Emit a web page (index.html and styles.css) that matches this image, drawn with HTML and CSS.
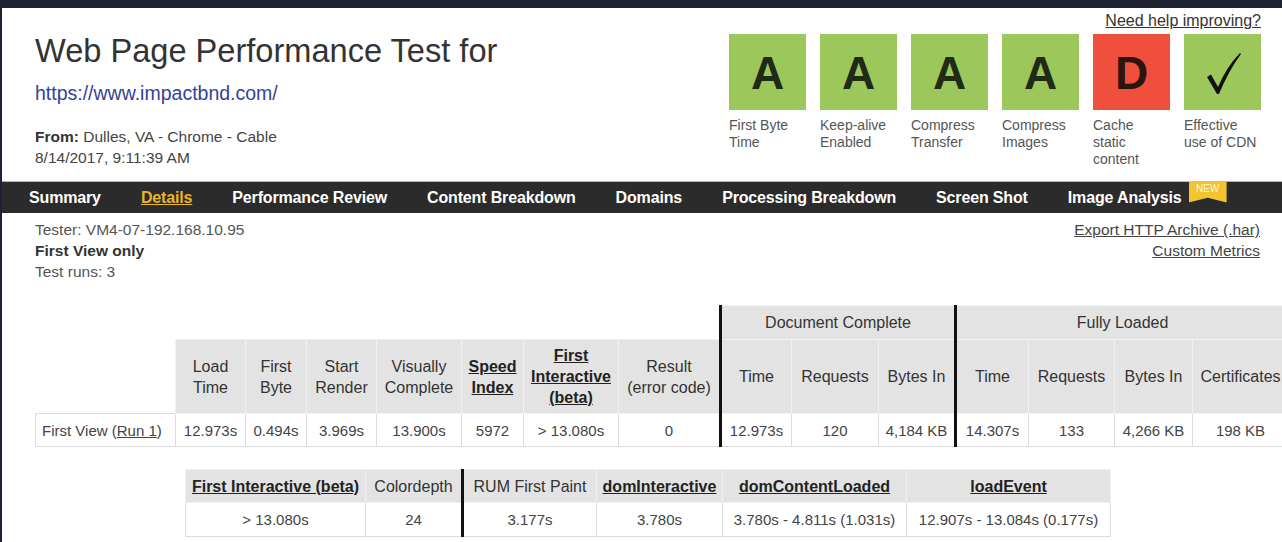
FILE: index.html
```html
<!DOCTYPE html>
<html lang="en">
<head>
    <meta charset="UTF-8">
    <title>WebPageTest Test Result - Details</title>
    <link rel="stylesheet" href="styles.css">
</head>
<body>
<div class="frame">
    <!-- test header -->
    <header class="test-head">
        <div class="test-info">
            <h1 class="test-title">Web Page Performance Test for</h1>
            <a class="test-url" href="#">https://www.impactbnd.com/</a>
            <p class="test-from"><b>From:</b> Dulles, VA - Chrome - Cable</p>
            <p class="test-date">8/14/2017, 9:11:39 AM</p>
        </div>

        <div class="grades">
            <a class="help-link" href="#">Need help improving?</a>
            <ul class="grade-list">
                <li class="grade">
                    <div class="grade-box good">A</div>
                    <span class="grade-label">First Byte Time</span>
                </li>
                <li class="grade">
                    <div class="grade-box good">A</div>
                    <span class="grade-label">Keep-alive Enabled</span>
                </li>
                <li class="grade">
                    <div class="grade-box good">A</div>
                    <span class="grade-label">Compress Transfer</span>
                </li>
                <li class="grade">
                    <div class="grade-box good">A</div>
                    <span class="grade-label">Compress Images</span>
                </li>
                <li class="grade">
                    <div class="grade-box bad">D</div>
                    <span class="grade-label">Cache static content</span>
                </li>
                <li class="grade">
                    <div class="grade-box good">
                        <svg class="check" width="40" height="46" viewBox="0 0 40 46">
                            <path d="M4 27 L8 24.5 L15 37 Q24 16 37 3 L38 4 Q26 20 16 44 L14 44 Z" fill="#111"/>
                        </svg>
                    </div>
                    <span class="grade-label">Effective use of CDN</span>
                </li>
            </ul>
        </div>
    </header>

    <!-- result tabs -->
    <nav class="tabs">
        <a href="#">Summary</a>
        <a href="#" class="active">Details</a>
        <a href="#">Performance Review</a>
        <a href="#">Content Breakdown</a>
        <a href="#">Domains</a>
        <a href="#">Processing Breakdown</a>
        <a href="#">Screen Shot</a>
        <a href="#" class="has-badge">Image Analysis<span class="badge-new">NEW</span></a>
    </nav>

    <div class="sub-head">
        <div class="tester">
            <p>Tester: VM4-07-192.168.10.95</p>
            <p><b>First View only</b></p>
            <p>Test runs: 3</p>
        </div>
        <div class="exports">
            <a href="#">Export HTTP Archive (.har)</a>
            <a href="#">Custom Metrics</a>
        </div>
    </div>

    <!-- main result table -->
    <table class="results">
        <colgroup>
            <col style="width:140px"><col style="width:70px"><col style="width:61px"><col style="width:70px">
            <col style="width:85px"><col style="width:62px"><col style="width:95px"><col style="width:102px">
            <col style="width:71px"><col style="width:87px"><col style="width:77px">
            <col style="width:73px"><col style="width:86px"><col style="width:78px"><col style="width:96px">
        </colgroup>
        <tr class="group-row">
            <td class="blank" colspan="8"></td>
            <th class="sep" colspan="3">Document Complete</th>
            <th class="sep" colspan="4">Fully Loaded</th>
        </tr>
        <tr class="head-row">
            <td class="blank"></td>
            <th>Load<br>Time</th>
            <th>First<br>Byte</th>
            <th>Start<br>Render</th>
            <th>Visually<br>Complete</th>
            <th><a href="#">Speed<br>Index</a></th>
            <th><a href="#">First<br>Interactive<br>(beta)</a></th>
            <th>Result<br>(error code)</th>
            <th class="sep">Time</th>
            <th>Requests</th>
            <th>Bytes In</th>
            <th class="sep">Time</th>
            <th>Requests</th>
            <th>Bytes In</th>
            <th>Certificates</th>
        </tr>
        <tr class="data-row">
            <td class="label">First View (<a href="#">Run 1</a>)</td>
            <td>12.973s</td>
            <td>0.494s</td>
            <td>3.969s</td>
            <td>13.900s</td>
            <td>5972</td>
            <td>&gt; 13.080s</td>
            <td>0</td>
            <td class="sep">12.973s</td>
            <td>120</td>
            <td>4,184 KB</td>
            <td class="sep">14.307s</td>
            <td>133</td>
            <td>4,266 KB</td>
            <td>198 KB</td>
        </tr>
    </table>

    <!-- RUM / extra metrics -->
    <table class="rum">
        <colgroup>
            <col style="width:180px"><col style="width:97px"><col style="width:134px">
            <col style="width:126px"><col style="width:184px"><col style="width:204px">
        </colgroup>
        <tr>
            <th><a href="#">First Interactive (beta)</a></th>
            <th>Colordepth</th>
            <th class="sep">RUM First Paint</th>
            <th><a href="#">domInteractive</a></th>
            <th><a href="#">domContentLoaded</a></th>
            <th><a href="#">loadEvent</a></th>
        </tr>
        <tr>
            <td>&gt; 13.080s</td>
            <td>24</td>
            <td class="sep">3.177s</td>
            <td>3.780s</td>
            <td>3.780s - 4.811s (1.031s)</td>
            <td>12.907s - 13.084s (0.177s)</td>
        </tr>
    </table>

    <div class="scroll-edge"></div>
</div>
</body>
</html>
```

FILE: styles.css
```css
/* base */
* { margin: 0; padding: 0; box-sizing: border-box; }
html, body { height: 100%; }
body { background: #fff; overflow: hidden; font-family: 'Liberation Sans', Arial, sans-serif; font-size: 15.5px; color: #444; }
a { color: inherit; }
.frame { border-top: 8px solid #1d2331; border-left: 2px solid #1d2331; min-height: 100%; }

/* header */
.test-head { display: flex; justify-content: space-between; padding: 0 21px 0 33px; height: 173px; }
.test-title { margin-top: 24px; font-size: 32.6px; line-height: 38px; font-weight: 400; color: #333; }
.test-url { display: block; margin-top: 11px; font-size: 19.5px; line-height: 24px; color: #33429a; text-decoration: none; }
.test-from { margin-top: 21px; line-height: 21px; color: #444; }
.test-from b { color: #333; }
.test-date { line-height: 21px; color: #444; }

/* grades */
.grades { display: flex; flex-direction: column; align-items: flex-end; }
.help-link { margin-top: 3px; font-size: 16px; line-height: 19px; color: #333; }
.grade-list { list-style: none; display: flex; gap: 14px; margin-top: 4px; }
.grade { width: 77px; }
.grade-box { width: 77px; height: 76px; display: flex; align-items: center; justify-content: center; font-size: 46px; font-weight: 700; color: #1f2a17; padding-top: 2px; }
.grade-box.good { background: #9cc75b; }
.grade-box.bad { background: #ef4f3c; color: #2a1511; }
.grade-label { display: block; margin-top: 7px; font-size: 14px; line-height: 17px; color: #555; }

/* tabs */
.tabs { display: flex; align-items: center; gap: 40px; height: 32px; padding-left: 27px; background: #2b2b2b; border-top: 1px solid #b9b9b9; }
.tabs a { position: relative; color: #fff; text-decoration: none; font-weight: 700; font-size: 16px; letter-spacing: -0.15px; }
.tabs a.active { color: #e7b525; text-decoration: underline; }
.badge-new {
    position: absolute;
    left: calc(100% + 7px);
    top: -8px;
    width: 38px;
    height: 22px;
    padding-top: 2px;
    background: #f2c431;
    color: #fff6cf;
    font-size: 10px;
    font-weight: 400;
    letter-spacing: 0;
    text-align: center;
    line-height: 12px;
    clip-path: polygon(0 0, 100% 0, 100% 100%, 50% 78%, 0 100%);
}

/* tester info */
.sub-head { display: flex; justify-content: space-between; padding: 0 22px 0 33px; margin-top: 6px; }
.tester p { line-height: 21px; color: #555; }
.tester b { color: #333; }
.exports { display: flex; flex-direction: column; align-items: flex-end; }
.exports a { line-height: 21px; color: #444; }

/* result tables */
table { border-collapse: collapse; table-layout: fixed; text-align: center; }
th { font-weight: 400; font-size: 16px; line-height: 21px; color: #333; background: #e3e3e3; border: 1px solid #f1f1f1; }
th a { font-weight: 700; color: #222; }
td { font-size: 15px; color: #444; border: 1px solid #dcdcdc; background: #fff; white-space: nowrap; }
td.blank { border: none; background: transparent; }
td.label { text-align: left; padding-left: 6px; }
.sep { border-left: 3px solid #111; }

.results { margin: 23px 0 0 33px; width: 1253px; }
.results .group-row { height: 34px; }
.results .head-row { height: 74px; }
.results .data-row { height: 33px; }

.rum { margin: 22px 0 0 183px; width: 925px; }
.rum tr { height: 33px; }
.rum tr + tr { height: 34px; }

.scroll-edge { margin-top: 5px; height: 3px; background: #cfcfcf; }
```
